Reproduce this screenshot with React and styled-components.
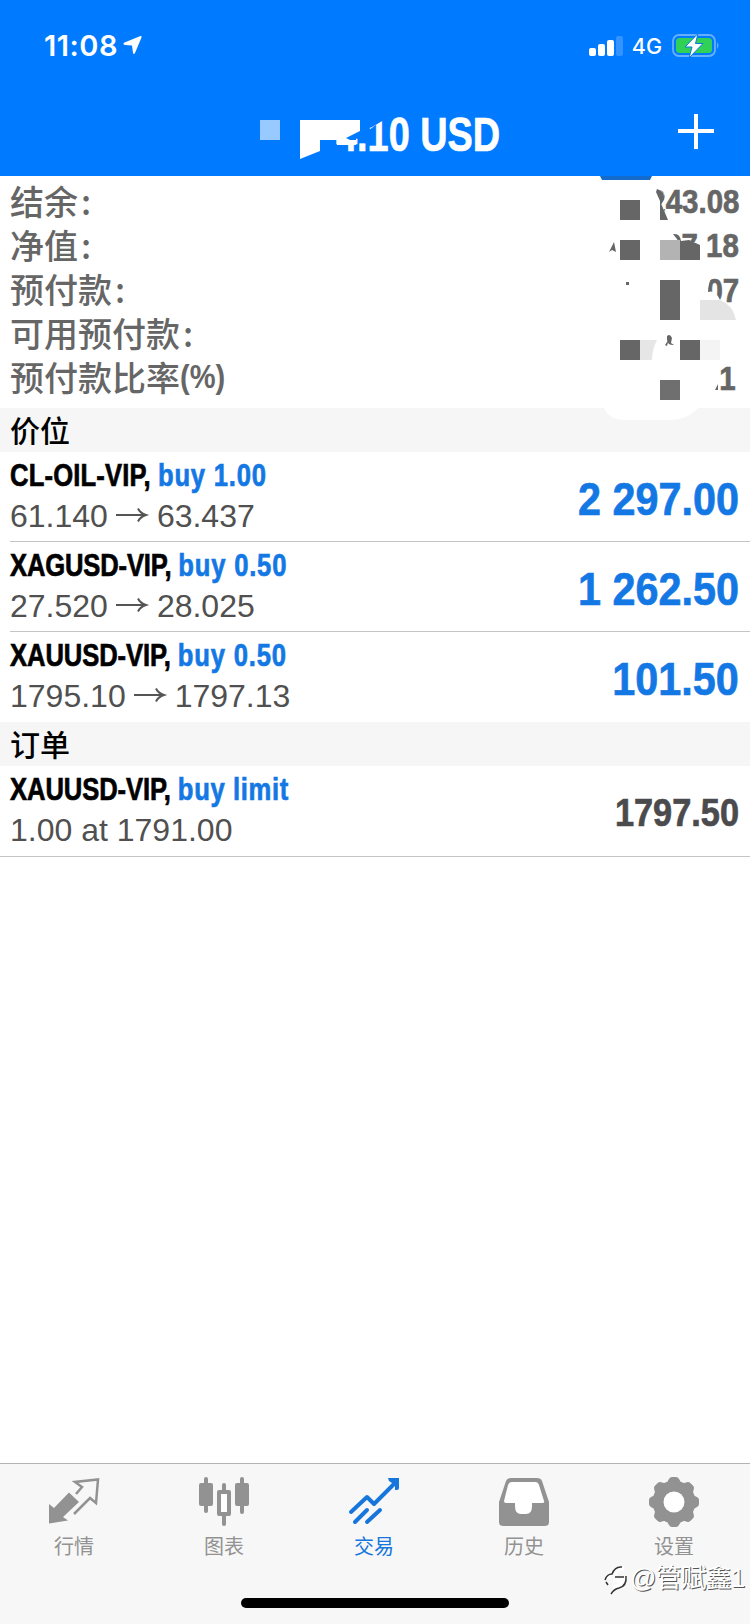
import React from "react";
import styled, { createGlobalStyle } from "styled-components";

const GlobalStyle = createGlobalStyle`
  * { box-sizing: border-box; }
  body { margin: 0; background: #fff; }
`;

const sans = `"Liberation Sans", "Noto Sans CJK SC", sans-serif`;

const Screen = styled.div`
  position: relative;
  display: flex;
  flex-direction: column;
  width: 750px;
  height: 1624px;
  background: #fff;
  font-family: ${sans};
  overflow: hidden;
`;
const Header = styled.header`
  height: 176px;
  background: #007aff;
  color: #fff;
  display: flex;
  flex-direction: column;
`;
const StatusBar = styled.div`
  height: 88px;
  padding: 3px 29px 0 44px;
  display: flex;
  align-items: center;
`;
const Clock = styled.span`
  font: 600 29px/32px Inter, sans-serif;
  letter-spacing: 0.5px;
  width: 76px;
  white-space: nowrap;
`;
const StatusRight = styled.div`
  margin-left: auto;
  display: flex;
  align-items: center;
`;
const Network = styled.span`
  font: 500 21.5px/28px Inter, sans-serif;
  margin: 1px 10px 0 8px;
`;
const NavBar = styled.div`
  height: 88px;
  padding: 0 36px 0 252px;
  display: flex;
  align-items: center;
  justify-content: space-between;
`;
const Title = styled.h1`
  margin: 4px 0 0 84px;
  font-size: 49px;
  line-height: 56px;
  font-weight: 700;
  white-space: nowrap;
  -webkit-text-stroke: 0.7px currentColor;
  transform: scaleX(${(p) => p.$scale});
  transform-origin: left;
`;
const Mask = styled.svg`
  position: absolute;
  left: ${(p) => p.$x}px;
  top: ${(p) => p.$y}px;
`;
const Summary = styled.section`
  height: 232px;
  padding: 4px 11px 0 10px;
  color: #666;
`;
const SummaryRow = styled.div`
  display: flex;
  justify-content: space-between;
  align-items: center;
  height: 44.2px;
`;
const Label = styled.span`
  display: flex;
  align-items: center;
  font: 500 34px/40px "Noto Sans CJK SC", sans-serif;
  margin-top: -3px;
`;
const Colon = styled.span`
  margin-left: 3px;
`;
const Percent = styled.span`
  font: 700 33px/40px "Liberation Sans", sans-serif;
  transform: scaleX(0.88);
  transform-origin: left;
`;
const Amount = styled.span`
  font-weight: 700;
  font-size: ${(p) => p.$size}px;
  line-height: 1.1;
  color: ${(p) => p.$color};
  margin: 1px ${(p) => p.$inset || 0}px 0 0;
  -webkit-text-stroke: 0.7px currentColor;
  transform: scaleX(0.88);
  transform-origin: right;
  white-space: nowrap;
`;
const SectionTitle = styled.h2`
  margin: 0;
  height: 44px;
  padding-left: 10px;
  background: #f6f6f6;
  color: #000;
  font: 500 30px/42px "Noto Sans CJK SC", sans-serif;
`;
const Position = styled.div`
  height: ${(p) => p.$height}px;
  margin-left: ${(p) => (p.$full ? 0 : 10)}px;
  padding: 3px 11px 0 ${(p) => (p.$full ? 10 : 0)}px;
  border-bottom: 1px solid ${(p) => (p.$last ? "transparent" : "#c4c4c6")};
  display: flex;
  justify-content: space-between;
  align-items: center;
`;
const Details = styled.div`
  align-self: flex-start;
`;
const Instrument = styled.div`
  font-size: 32px;
  line-height: 41px;
  font-weight: 700;
  white-space: nowrap;
  letter-spacing: ${(p) => p.$spacing}px;
  -webkit-text-stroke: 0.7px currentColor;
  transform: scaleX(0.8);
  transform-origin: left;
  color: #000;
`;
const Side = styled.span`
  color: #1478e4;
  letter-spacing: ${(p) => p.$spacing ?? 1}px;
`;
const Prices = styled.div`
  display: flex;
  align-items: center;
  font-size: 32px;
  line-height: 40px;
  color: #505050;
  white-space: pre;
`;
const Spacer = styled.div`
  flex: 1;
`;
const TabBar = styled.nav`
  height: 161px;
  border-top: 1px solid #b4b4b6;
  background: #f7f7f7;
  display: flex;
  padding: 12px 0 0;
`;
const Tab = styled.div`
  flex: 1;
  padding-right: 2px;
  display: flex;
  flex-direction: column;
  align-items: center;
  color: ${(p) => (p.$active ? "#1676dc" : "#929292")};
`;
const TabLabel = styled.span`
  font: 400 20px/28px "Noto Sans CJK SC", sans-serif;
  margin-top: 4px;
`;
const HomeIndicator = styled.div`
  position: absolute;
  left: 241px;
  top: 1598px;
  width: 268px;
  height: 10px;
  border-radius: 5px;
  background: #000;
`;
const Watermark = styled.div`
  position: absolute;
  left: 603px;
  top: 1559px;
  display: flex;
  align-items: center;
  color: #fff;
  font: 400 26px/38px "Liberation Sans", "Noto Sans CJK SC", sans-serif;
  letter-spacing: -0.9px;
  text-shadow: 1px 1px 0 #555;
  white-space: nowrap;
`;

const Arrow = () => (
  <svg width="49" height="24" viewBox="0 0 49 24" fill="none" stroke="#555" strokeWidth="2">
    <path d="M8 11H37.500M30 4.500Q32 9 38 11Q32 13 30 17.500" />
  </svg>
);

const QuotesIcon = () => (
  <svg width="52" height="52" viewBox="0 0 52 52">
    <path fill="currentColor" d="M1 28L6 32L21 16.500L31 26L15 41L20 44.500L1 47.500Z" />
    <path fill="none" stroke="currentColor" strokeWidth="2.500" d="M28 18L34 11L27 6L50 3.500L48 27L42 22L26 38" />
  </svg>
);
const ChartIcon = () => (
  <svg width="52" height="52" viewBox="0 0 52 52" fill="currentColor">
    <rect x="1" y="7" width="14" height="23" rx="2" />
    <rect x="6" y="1" width="4" height="36" rx="2" />
    <rect x="37" y="7" width="14" height="23" rx="2" />
    <rect x="42" y="1" width="4" height="37" rx="2" />
    <path fillRule="evenodd" d="M21 14H31Q33 14 33 16V38Q33 40 31 40H21Q19 40 19 38V16Q19 14 21 14ZM23 18V36H29V18Z" />
    <rect x="23" y="18" width="6" height="18" fill="#fff" />
    <rect x="24" y="7" width="4" height="10" rx="2" />
    <rect x="24" y="37" width="4" height="13" rx="2" />
  </svg>
);
const TradeIcon = () => (
  <svg width="52" height="52" viewBox="0 0 52 52" fill="none" stroke="currentColor" strokeWidth="4" strokeLinecap="round" strokeLinejoin="round">
    <path d="M3 36L19 21L26 28L48 6" />
    <path d="M7 46L19 34M19 46L32 34" />
    <path d="M40 2H51V12Q51 14 49 14H47V9L41 5Z" fill="currentColor" stroke="none" />
  </svg>
);
const HistoryIcon = () => (
  <svg width="52" height="52" viewBox="0 0 52 52">
    <path fill="#fff" d="M10 6H42L47 28H36V38H16V28H5Z" />
    <path fill="currentColor" fillRule="evenodd" d="M13 2H39Q43 2 44 5L51 26V46Q51 50 47 50H5Q1 50 1 46V26L8 5Q9 2 13 2ZM14 6Q11 6 10 9L6 25Q6 27 8 27H17V30Q17 38 23 38H28Q34 38 34 30V27H44Q47 27 46 25L41 9Q40 6 38 6Z" />
  </svg>
);
const SettingsIcon = () => (
  <svg width="52" height="52" viewBox="0 0 52 52">
    <g fill="currentColor">
      <circle cx="26" cy="26" r="21" />
      {[0, 45, 90, 135, 180, 225, 270, 315].map((a) => (
        <path key={a} transform={`rotate(${a} 26 26)`} d="M17 7Q20 6 21 3Q22 1 24 1H28Q30 1 31 3Q32 6 35 7Z" />
      ))}
    </g>
    <circle cx="26" cy="26" r="10.500" fill="#fff" />
  </svg>
);

const summary = [
  ["结余", true, "243.08"],
  ["净值", true, "07.18"],
  ["预付款", true, "07"],
  ["可用预付款", true, ""],
  ["预付款比率", false, "1", 3],
];
const positions = [
  { symbol: "CL-OIL-VIP,", side: "buy 1.00", from: "61.140", to: "63.437", value: "2 297.00", height: 90, spacing: 0.2 },
  { symbol: "XAGUSD-VIP,", side: "buy 0.50", from: "27.520", to: "28.025", value: "1 262.50", height: 90, spacing: -0.2 },
  { symbol: "XAUUSD-VIP,", side: "buy 0.50", from: "1795.10", to: "1797.13", value: "101.50", height: 90, last: true, spacing: -0.1 },
];
const tabs = [
  ["行情", QuotesIcon],
  ["图表", ChartIcon],
  ["交易", TradeIcon],
  ["历史", HistoryIcon],
  ["设置", SettingsIcon],
];

export default function App() {
  return (
    <Screen>
      <GlobalStyle />
      <Header>
        <StatusBar>
          <Clock>11:08</Clock>
          <svg width="26" height="24" viewBox="0 0 26 24">
            <path d="M20.500 2Q22 1.500 21.500 3.500L15 19Q13.500 21 13 19L12 11.500L5 11Q2 10 4.500 8.500Z" fill="#fff" />
          </svg>
          <StatusRight>
            <svg width="35" height="22" viewBox="0 0 35 22" fill="#fff">
              <rect x="0" y="13" width="7" height="8" rx="2" />
              <rect x="9" y="9" width="7" height="12" rx="2" />
              <rect x="18" y="5" width="7" height="16" rx="2" />
              <rect x="27" y="1" width="7" height="20" rx="2" opacity=".2" />
            </svg>
            <Network>4G</Network>
            <svg width="49" height="26" viewBox="0 0 49 26">
              <rect x="1" y="2" width="42" height="21" rx="6" fill="none" stroke="#66afff" strokeWidth="1.800" />
              <rect x="4" y="5" width="36" height="15" rx="3.500" fill="#31d158" />
              <path d="M45 9Q48 12.500 45 16Z" fill="#66afff" />
              <path d="M26 0.500L13 14H20L17 25L31 10.500H23.500Z" fill="#fff" stroke="#087bdc" strokeWidth="1" />
            </svg>
          </StatusRight>
        </StatusBar>
        <NavBar>
          <Title $scale={0.773}>4.10 USD</Title>
          <svg width="36" height="36" viewBox="0 0 36 36" stroke="#fff" strokeWidth="4">
            <path d="M0 17H36M18 -1V35" />
          </svg>
        </NavBar>
      </Header>
      <Summary>
        {summary.map(([label, colon, value, inset]) => (
          <SummaryRow key={label}>
            <Label>
              {label}
              {colon ? <Colon>:</Colon> : <Percent>(%)</Percent>}
            </Label>
            <Amount $size={33.5} $color="#666" $inset={inset}>{value}</Amount>
          </SummaryRow>
        ))}
      </Summary>
      <SectionTitle>价位</SectionTitle>
      {positions.map((p) => (
        <Position key={p.symbol} $height={p.height} $last={p.last}>
          <Details>
            <Instrument $spacing={p.spacing}>
              {p.symbol} <Side>{p.side}</Side>
            </Instrument>
            <Prices>
              {p.from}
              <Arrow />
              {p.to}
            </Prices>
          </Details>
          <Amount $size={47} $color="#1478e4">{p.value}</Amount>
        </Position>
      ))}
      <SectionTitle>订单</SectionTitle>
      <Position $height={91} $full>
        <Details>
          <Instrument $spacing={-0.1}>
            XAUUSD-VIP, <Side $spacing={0.8}>buy limit</Side>
          </Instrument>
          <Prices>1.00 at 1791.00</Prices>
        </Details>
        <Amount $size={39} $color="#4b4b4d">1797.50</Amount>
      </Position>
      <Spacer />
      <TabBar>
        {tabs.map(([label, Icon]) => (
          <Tab key={label} $active={label === "交易"}>
            <Icon />
            <TabLabel>{label}</TabLabel>
          </Tab>
        ))}
      </TabBar>
      <Mask $x={250} $y={105} width="140" height="60">
        <path d="M82 0H134V15L122 22L106 28V35H82Z" fill="#007aff" />
        <rect x="10" y="15" width="20" height="20" fill="#99caff" />
        <path d="M50 15H110V26L96 33L100 35H106V40H87V37L92 35H70V46L50 54Z" fill="#fff" />
      </Mask>
      <Mask $x={590} $y={165} width="160" height="260">
        <path d="M10 11H62L60 15H12Z" fill="#156bcb" />
        <path d="M58 22H67L75 29L70 37L79 55H58ZM66 66H83L93 77H110L106 96H66Z" fill="#fff" />
        <path d="M104 84H115V97H104Z" fill="#fff" />
        <path d="M106 111H122Q118 119 118 127Q126 124 131 137H106Z" fill="#fff" />
        <path d="M66 27L67 24Q75 26 74 34L70 42V36ZM70 36L78 55H70Z" fill="#666" />
        <g fill="#666">
          <rect x="30" y="35" width="20" height="20" />
          <rect x="30" y="75" width="20" height="20" />
          <path d="M19 87L24 77L26 87L22 85ZM83 69Q90 68 91 76L99 75L110 80V95H90V78Z" />
          <rect x="36" y="117" width="3" height="3" />
          <rect x="70" y="115" width="20" height="40" />
          <rect x="30" y="175" width="20" height="20" />
          <rect x="90" y="175" width="20" height="20" />
          <path d="M75 180L79 174L77 181ZM77 171Q80 168 82 173L81 178L84 180Q76 181 77 171ZM125 225L128 219V225Z" />
        </g>
        <rect x="70" y="75" width="20" height="20" fill="#b3b3b3" />
        <path d="M110 135H130Q143 140 146 155H110Z" fill="#e4e4e4" />
        <path d="M50 175H67Q62 185 62 195H50Z" fill="#e6e6e6" />
        <rect x="110" y="175" width="20" height="20" fill="#f4f4f4" />
        <rect x="70" y="215" width="20" height="20" fill="#6f6f6f" />
        <path d="M14 243H108Q98 255 78 255H35Q19 255 14 243Z" fill="#fff" />
      </Mask>
      <HomeIndicator />
      <Watermark>
        <svg width="27" height="34" viewBox="0 0 27 34" fill="none" strokeWidth="1.500">
          <path d="M5 18Q7 12 12 13Q13 7 21 7M10 19H21Q21 24 10 27" stroke="#fff" strokeWidth="5" />
          <path d="M2 19Q4 13 9 13Q12 5 19 6M12 16H21M23 15Q24 25 16 27Q11 28 8 33M3 21L5 24" stroke="#333" />
        </svg>
        @管赋鑫1
      </Watermark>
    </Screen>
  );
}
